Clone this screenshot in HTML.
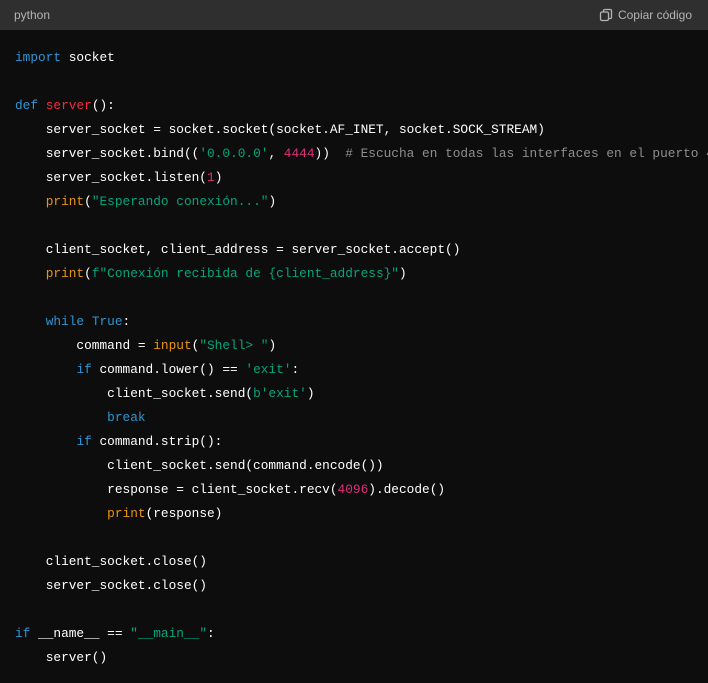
<!DOCTYPE html>
<html><head><meta charset="utf-8"><style>
html,body{margin:0;padding:0;background:#0d0d0d;width:708px;height:683px;overflow:hidden}
.hd{height:30px;background:#2f2f2f;color:#b4b4b4;font:12px "Liberation Sans",sans-serif;display:flex;align-items:center;justify-content:space-between;padding:0 16px 0 14px}
.cp{display:flex;align-items:center;gap:5px}
pre{margin:0;padding:16px 0 0 15px;font:12.8px/24px "Liberation Mono",monospace;color:#fff;white-space:pre;overflow:hidden}
.k{color:#2e95d3}.f{color:#f22c3d}.s{color:#00a67d}.n{color:#df3079}.b{color:#e9950c}.c{color:#8e8e8e}
</style></head><body>
<div class="hd"><span>python</span><span class="cp"><svg width="14" height="14" viewBox="0 0 14 14" fill="none" stroke="#b4b4b4" stroke-width="1.3"><rect x="1.5" y="4" width="8" height="8.5" rx="1.5"/><path d="M4.5 4V2.8A1.3 1.3 0 0 1 5.8 1.5h5.4a1.3 1.3 0 0 1 1.3 1.3v6.4a1.3 1.3 0 0 1-1.3 1.3H9.5"/></svg>Copiar código</span></div>
<pre><span class="k">import</span> socket

<span class="k">def</span> <span class="f">server</span>():
    server_socket = socket.socket(socket.AF_INET, socket.SOCK_STREAM)
    server_socket.bind((<span class="s">'0.0.0.0'</span>, <span class="n">4444</span>))  <span class="c"># Escucha en todas las interfaces en el puerto 4444</span>
    server_socket.listen(<span class="n">1</span>)
    <span class="b">print</span>(<span class="s">"Esperando conexión..."</span>)

    client_socket, client_address = server_socket.accept()
    <span class="b">print</span>(<span class="s">f"Conexión recibida de {client_address}"</span>)

    <span class="k">while</span> <span class="k">True</span>:
        command = <span class="b">input</span>(<span class="s">"Shell&gt; "</span>)
        <span class="k">if</span> command.lower() == <span class="s">'exit'</span>:
            client_socket.send(<span class="s">b'exit'</span>)
            <span class="k">break</span>
        <span class="k">if</span> command.strip():
            client_socket.send(command.encode())
            response = client_socket.recv(<span class="n">4096</span>).decode()
            <span class="b">print</span>(response)

    client_socket.close()
    server_socket.close()

<span class="k">if</span> __name__ == <span class="s">"__main__"</span>:
    server()
</pre>
</body></html>
